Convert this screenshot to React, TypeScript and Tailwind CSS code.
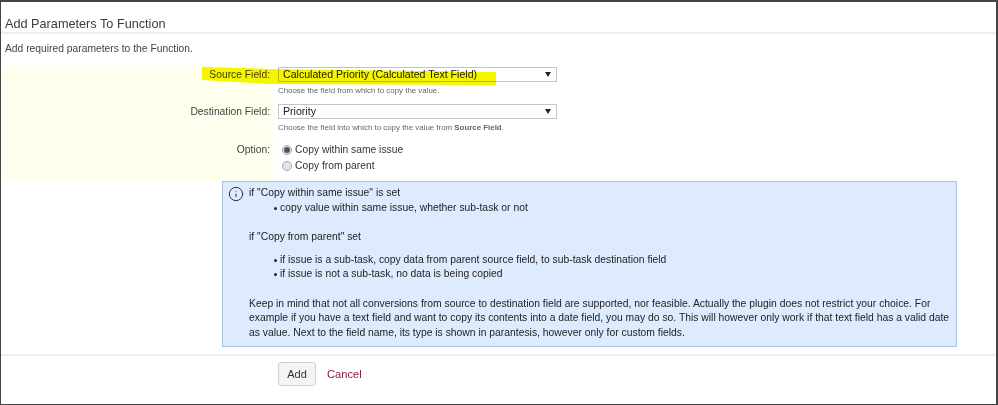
import { Info } from 'lucide-react';

function SelectBox({ value }: { value: string }) {
  return (
    <div className="flex h-[15px] w-[279px] items-center justify-between border border-[#c4c4c4] bg-white pl-[4px] pr-[5px] text-[10.6px] leading-none text-[#222]">
      <span>{value}</span>
      <span className="h-0 w-0 border-x-[3px] border-t-[5px] border-x-transparent border-t-[#222]" />
    </div>
  );
}

function Radio({ checked, label }: { checked?: boolean; label: string }) {
  return (
    <div className="flex h-[16px] items-center gap-[3px] pl-[4px]">
      <span className="flex h-[10px] w-[10px] items-center justify-center rounded-full border border-[#a8a8a8] bg-[#e4e4e4]">
        {checked && <span className="h-[6px] w-[6px] rounded-full bg-[#555]" />}
      </span>
      <span>{label}</span>
    </div>
  );
}

function Row({ label, children, className }: { label: string; children: React.ReactNode; className?: string }) {
  return (
    <div className={`flex ${className ?? ''}`}>
      <div className="w-[269px] shrink-0 text-right leading-[15px] text-[#444]">{label}</div>
      <div className="pl-[8px]">{children}</div>
    </div>
  );
}

function Bullet({ children }: { children: React.ReactNode }) {
  return (
    <li className="flex gap-[3px]">
      <span className="mt-[6px] h-[3px] w-[3px] shrink-0 rounded-full bg-[#222]" />
      <span>{children}</span>
    </li>
  );
}

export default function App() {
  return (
    <div className="relative h-[405px] w-[998px] overflow-hidden border-t-[2px] border-r-[2px] border-b-[1px] border-l-[1px] border-[#444] bg-white font-['Liberation_Sans',Arial,sans-serif] text-[10.3px] text-[#333]">
      <div className="flex h-[32px] items-end border-b-[2px] border-[#eeeeee] pl-[4px] text-[12.7px] leading-[16px] text-[#3b3b3b]">
        Add Parameters To Function
      </div>

      <p className="pl-[4px] pt-[7px] leading-[16px] text-[#444]">Add required parameters to the Function.</p>

      <div className="mt-[9px] flex h-[115px] flex-col bg-[linear-gradient(to_right,#ffffee_273px,white_273px)] pt-[1px]">
        <Row label="Source Field:">
          <SelectBox value="Calculated Priority (Calculated Text Field)" />
          <div className="pt-[3px] text-[7.9px] leading-[12px] text-[#666]">Choose the field from which to copy the value.</div>
        </Row>
        <Row label="Destination Field:" className="mt-[7px]">
          <SelectBox value="Priority" />
          <div className="pt-[3px] text-[7.9px] leading-[12px] text-[#666]">
            Choose the field into which to copy the value from <b>Source Field</b>.
          </div>
        </Row>
        <Row label="Option:" className="mt-[8px]">
          <Radio checked label="Copy within same issue" />
          <Radio label="Copy from parent" />
        </Row>
      </div>

      <div className="ml-[221px] flex h-[166px] w-[735px] gap-[5px] border border-[#a9c2e0] bg-[#deebff] pl-[5px] pt-[4px] text-[#222]">
        <Info size={16} strokeWidth={1.5} className="shrink-0 text-[#333]" />
        <div className="w-[704px] text-[10.35px] leading-[14.5px]">
          <div>if "Copy within same issue" is set</div>
          <ul className="pl-[25px]">
            <Bullet>copy value within same issue, whether sub-task or not</Bullet>
          </ul>
          <div className="mt-[15px]">if "Copy from parent" set</div>
          <ul className="mt-[8px] pl-[25px]">
            <Bullet>if issue is a sub-task, copy data from parent source field, to sub-task destination field</Bullet>
            <Bullet>if issue is not a sub-task, no data is being copied</Bullet>
          </ul>
          <p className="mt-[15px]">
            Keep in mind that not all conversions from source to destination field are supported, nor feasible. Actually the plugin does not restrict your choice. For example if you have a text field and want to copy its contents into a date field, you may do so. This will however only work if that text field has a valid date as value. Next to the field name, its type is shown in parantesis, however only for custom fields.
          </p>
        </div>
      </div>

      <div className="mt-[7px] flex items-center gap-[11px] border-t-[2px] border-[#eeeeee] pl-[277px] pt-[6px]">
        <button className="h-[24px] w-[38px] rounded-[3px] border border-[#d0d0d0] bg-[#f4f4f4] text-[11px] text-[#333]">Add</button>
        <span className="text-[11.2px] text-[#8c1c3c]">Cancel</span>
      </div>

      {/* highlighter stroke drawn over the first row */}
      <svg className="pointer-events-none absolute left-0 top-0 mix-blend-multiply blur-[0.5px]" width="998" height="405">
        <polygon points="201,65 270,67 495,70 495,83 270,82 201,78" fill="#f5f500" />
      </svg>
    </div>
  );
}
